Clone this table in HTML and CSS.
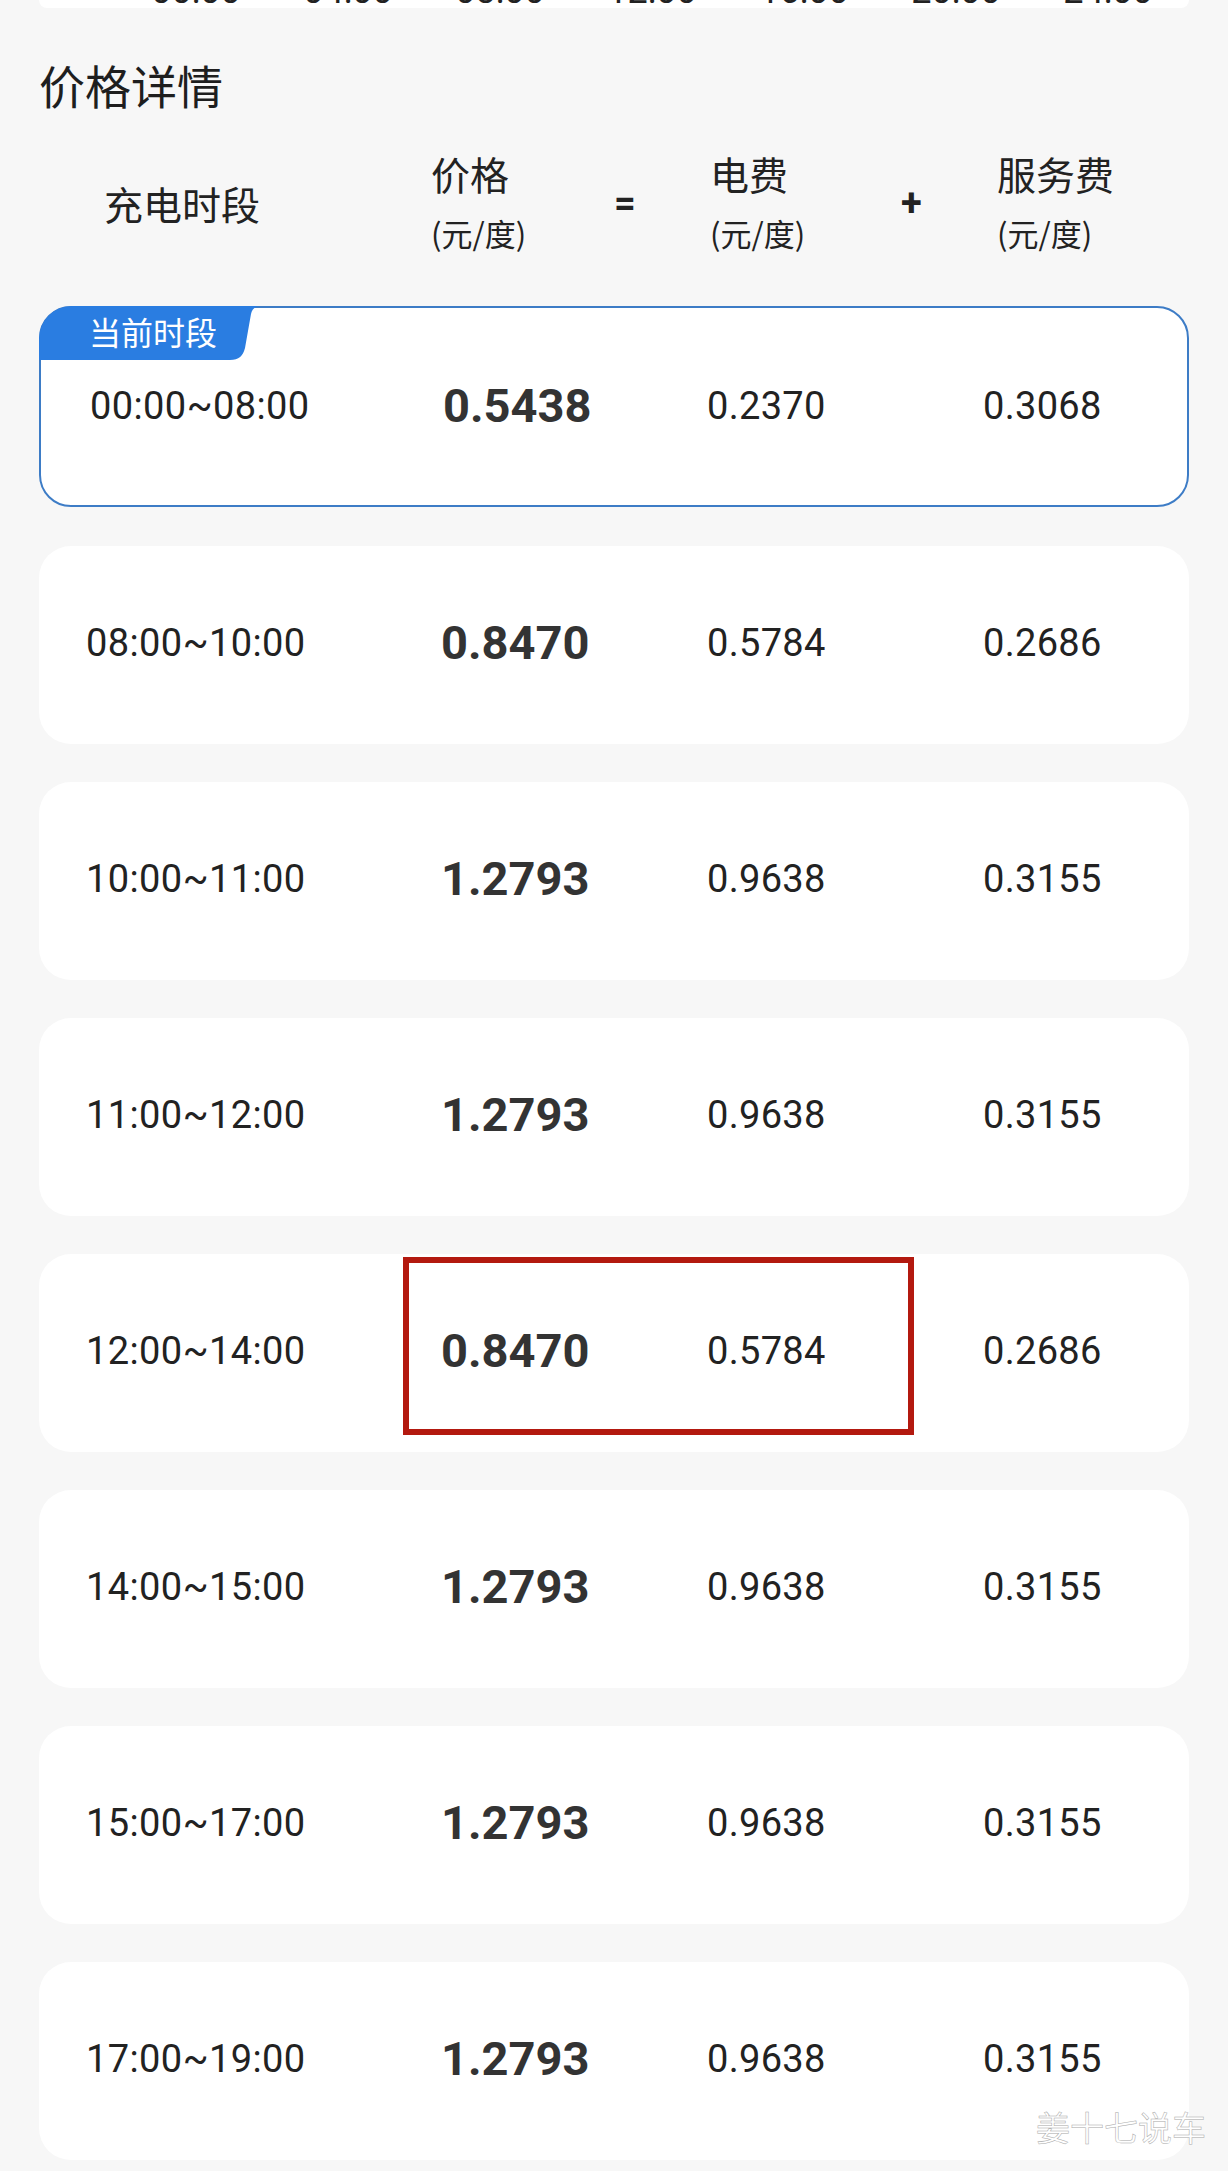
FILE: index.html
```html
<!DOCTYPE html>
<html lang="zh-CN">
<head>
<meta charset="utf-8">
<title>价格详情</title>
<link rel="stylesheet" href="styles.css">
</head>
<body>
<div class="page">
  <div class="topcard">
    <div class="ticks">
      <span>00:00</span><span>04:00</span><span>08:00</span><span>12:00</span><span>16:00</span><span>20:00</span><span>24:00</span>
    </div>
  </div>

  <h1 class="title">价格详情</h1>

  <div class="thead">
    <div class="th th-time">充电时段</div>
    <div class="th th-two"><span class="l1">价格</span><span class="l2">(元/度)</span></div>
    <div class="th th-op">=</div>
    <div class="th th-two"><span class="l1">电费</span><span class="l2">(元/度)</span></div>
    <div class="th th-op">+</div>
    <div class="th th-two"><span class="l1">服务费</span><span class="l2">(元/度)</span></div>
  </div>

  <div class="list">
    <div class="card current">
      <div class="badge">
        <svg class="badge-bg" width="222" height="55" viewBox="0 0 222 55"><path d="M0 55 L0 33 A33 33 0 0 1 33 0 L222 0 C216 0 213 3 212 8 L206 42 C204 50 200 54 191 54 L0 54 Z" fill="#2a7de1"/></svg>
        <span class="badge-text">当前时段</span>
      </div>
      <div class="row"><span class="c-time">00:00~08:00</span><span class="c-price">0.5438</span><span class="c-num">0.2370</span><span class="c-num">0.3068</span></div>
    </div>
    <div class="card"><div class="row"><span class="c-time">08:00~10:00</span><span class="c-price">0.8470</span><span class="c-num">0.5784</span><span class="c-num">0.2686</span></div></div>
    <div class="card"><div class="row"><span class="c-time">10:00~11:00</span><span class="c-price">1.2793</span><span class="c-num">0.9638</span><span class="c-num">0.3155</span></div></div>
    <div class="card"><div class="row"><span class="c-time">11:00~12:00</span><span class="c-price">1.2793</span><span class="c-num">0.9638</span><span class="c-num">0.3155</span></div></div>
    <div class="card">
      <div class="mark"></div>
      <div class="row"><span class="c-time">12:00~14:00</span><span class="c-price">0.8470</span><span class="c-num">0.5784</span><span class="c-num">0.2686</span></div>
    </div>
    <div class="card"><div class="row"><span class="c-time">14:00~15:00</span><span class="c-price">1.2793</span><span class="c-num">0.9638</span><span class="c-num">0.3155</span></div></div>
    <div class="card"><div class="row"><span class="c-time">15:00~17:00</span><span class="c-price">1.2793</span><span class="c-num">0.9638</span><span class="c-num">0.3155</span></div></div>
    <div class="card"><div class="row"><span class="c-time">17:00~19:00</span><span class="c-price">1.2793</span><span class="c-num">0.9638</span><span class="c-num">0.3155</span></div></div>
  </div>

  <div class="watermark">姜十七说车</div>
</div>
</body>
</html>
```

FILE: styles.css
```css
* { box-sizing: border-box; }
html, body { margin: 0; padding: 0; background: #f7f7f7; }
body { font-family: Roboto, "Noto Sans CJK SC", sans-serif; color: #222; }

.page {
  position: relative;
  padding: 0 39px 11px 39px;
  height: 2171px;
  overflow: hidden;
}

.topcard {
  height: 8px;
  background: #fff;
  border-radius: 0 0 30px 30px;
  overflow: hidden;
}
.ticks {
  display: grid;
  grid-template-columns: repeat(7, 152px);
  margin-left: 81px;
  margin-top: -27px;
  font-family: Roboto, sans-serif;
  font-size: 36px;
  line-height: 36px;
  color: #222;
}
.ticks span { text-align: center; }

.title {
  margin: 46px 0 0 0;
  font-family: "Noto Sans CJK SC", sans-serif;
  font-weight: 400;
  font-size: 46px;
  line-height: 60px;
  color: #1e1e1e;
}

.thead {
  margin-top: 30px;
  display: grid;
  grid-template-columns: 65px 327px 181px 98px 189px 98px 1fr;
  align-items: center;
  font-family: "Noto Sans CJK SC", sans-serif;
  color: #222;
}
.th-time { grid-column: 2; font-size: 39px; line-height: 59px; }
.th-two { display: flex; flex-direction: column; }
.th-two .l1 { font-size: 39px; line-height: 59px; }
.th-two .l2 { font-size: 31px; line-height: 59px; }
.th-op { font-family: Roboto, sans-serif; font-weight: 700; font-size: 38px; line-height: 59px; padding-left: 2px; }

.list {
  margin-top: 44px;
  display: flex;
  flex-direction: column;
  gap: 38px;
}

.card {
  position: relative;
  height: 198px;
  background: #fff;
  border-radius: 32px;
  display: flex;
  align-items: center;
  padding-bottom: 5px;
}
.card.current {
  height: 201px;
  border: 2px solid #3d7cc6;
  margin-bottom: 1px;
  padding-bottom: 2px;
}

.badge {
  position: absolute;
  top: -2px;
  left: -2px;
  width: 222px;
  height: 55px;
}
.badge-bg { position: absolute; left: 0; top: 0; }
.badge-text {
  position: relative;
  display: block;
  padding-left: 50px;
  font-family: "Noto Sans CJK SC", sans-serif;
  font-size: 32px;
  line-height: 50px;
  color: #fff;
}

.row {
  display: grid;
  grid-template-columns: 355px 266px 276px 1fr;
  align-items: center;
  padding-left: 47px;
  width: 100%;
}
.current .row { padding-left: 49px; grid-template-columns: 353px 264px 276px 1fr; }
.c-time { font-size: 38px; letter-spacing: 0.4px; color: #222; }
.c-price { font-size: 47px; font-weight: 700; color: #333; }
.c-num { font-size: 38px; letter-spacing: 0.3px; color: #222; }

.mark {
  position: absolute;
  left: 364px;
  top: 3px;
  width: 511px;
  height: 178px;
  border: 6px solid #b3190f;
}

.watermark {
  position: absolute;
  left: 1036px;
  top: 2110px;
  font-family: "Noto Sans CJK SC", sans-serif;
  font-size: 34px;
  line-height: 34px;
  color: #ffffff;
  -webkit-text-stroke: 0.5px #a8a8a8;
}
```
